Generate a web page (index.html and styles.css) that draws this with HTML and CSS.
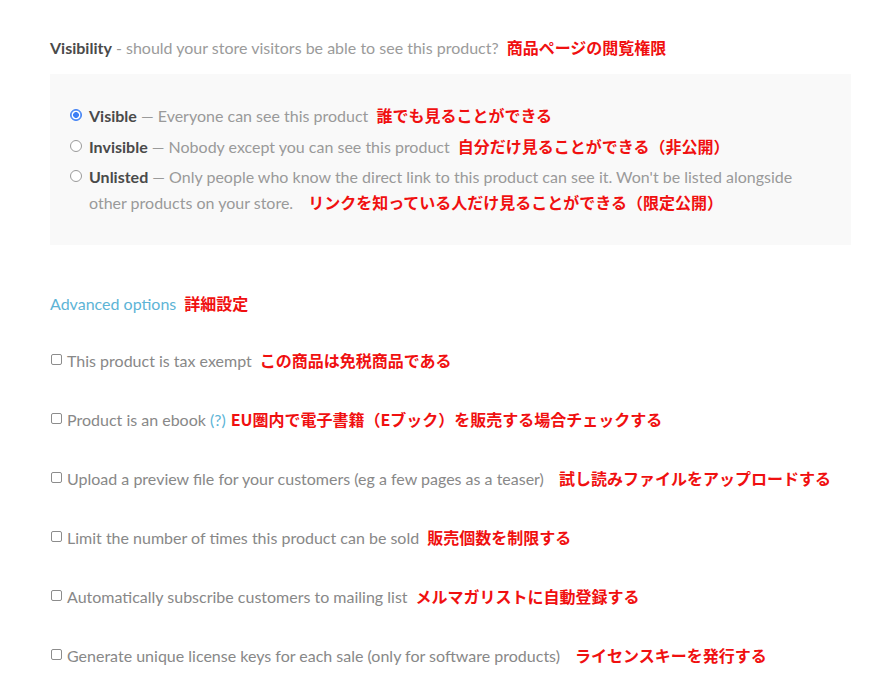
FILE: index.html
```html
<!DOCTYPE html>
<html lang="ja">
<head>
    <meta charset="UTF-8">
    <meta name="viewport" content="width=device-width, initial-scale=1.0">
    <title>Product settings</title>
    <link rel="stylesheet" href="styles.css">
</head>
<body>
    <div class="settings">
        <p class="section-title">
            <strong>Visibility</strong> - should your store visitors be able to see this product?<span class="note">商品ページの閲覧権限</span>
        </p>

        <div class="visibility-box">
            <label class="radio-row">
                <input type="radio" name="visibility" class="radio" checked>
                <span class="radio-text"><strong>Visible</strong> — Everyone can see this product<span class="note">誰でも見ることができる</span></span>
            </label>
            <label class="radio-row">
                <input type="radio" name="visibility" class="radio">
                <span class="radio-text"><strong>Invisible</strong> — Nobody except you can see this product<span class="note">自分だけ見ることができる（非公開）</span></span>
            </label>
            <label class="radio-row">
                <input type="radio" name="visibility" class="radio">
                <span class="radio-text"><strong>Unlisted</strong> — Only people who know the direct link to this product can see it. Won't be listed alongside other products on your store.<span class="note wide">リンクを知っている人だけ見ることができる（限定公開）</span></span>
            </label>
        </div>

        <p class="advanced">
            <a href="#" class="advanced-link">Advanced options</a><span class="note">詳細設定</span>
        </p>

        <div class="options">
            <label class="check-row">
                <input type="checkbox" class="checkbox">
                <span>This product is tax exempt<span class="note">この商品は免税商品である</span></span>
            </label>
            <label class="check-row">
                <input type="checkbox" class="checkbox">
                <span>Product is an ebook <a href="#" class="help">(?)</a><span class="note tight">EU圏内で電子書籍（Eブック）を販売する場合チェックする</span></span>
            </label>
            <label class="check-row">
                <input type="checkbox" class="checkbox">
                <span>Upload a preview file for your customers (eg a few pages as a teaser)<span class="note wide">試し読みファイルをアップロードする</span></span>
            </label>
            <label class="check-row">
                <input type="checkbox" class="checkbox">
                <span>Limit the number of times this product can be sold<span class="note">販売個数を制限する</span></span>
            </label>
            <label class="check-row">
                <input type="checkbox" class="checkbox">
                <span>Automatically subscribe customers to mailing list<span class="note">メルマガリストに自動登録する</span></span>
            </label>
            <label class="check-row">
                <input type="checkbox" class="checkbox">
                <span>Generate unique license keys for each sale (only for software products)<span class="note wide">ライセンスキーを発行する</span></span>
            </label>
        </div>
    </div>
</body>
</html>
```

FILE: styles.css
```css
body {
    margin: 0;
    background: #fff;
    font-family: Lato, "Noto Sans CJK JP", sans-serif;
    font-size: 16px;
    color: #999;
}

.settings {
    width: 801px;
    padding: 36px 0 0 50px;
}

.section-title {
    margin: 0;
    line-height: 24px;
    color: #9b9b9b;
}

.section-title strong {
    color: #4a4a4a;
}

.note {
    margin-left: 8px;
    font-family: "Noto Sans CJK JP", sans-serif;
    font-size: 16px;
    font-weight: bold;
    line-height: 1;
    color: #f01010;
}

.note.tight {
    margin-left: 5px;
}

.note.wide {
    margin-left: 15px;
}

.visibility-box {
    margin-top: 14px;
    padding: 29px 40px 29px 20px;
    background: #f9f9f9;
}

.radio-row {
    display: flex;
    align-items: flex-start;
    gap: 7px;
    line-height: 26px;
    margin-bottom: 4.5px;
    color: #9a9a9a;
}

.radio-row:last-child {
    margin-bottom: 0;
}

.radio-row strong {
    color: #4a4a4a;
}

.radio {
    appearance: none;
    flex: none;
    width: 12px;
    height: 12px;
    margin: 6px 0 0;
    border: 1px solid #9a9a9a;
    border-radius: 50%;
    background: #fff;
}

.radio:checked {
    border-color: #3d7ff5;
    background: radial-gradient(circle, #3d7ff5 0 2.6px, #fff 3.2px 4px, #6a9ff7 4.6px);
}

.advanced {
    margin: 47px 0 0;
    line-height: 24px;
}

.advanced-link {
    color: #5db4d6;
    text-decoration: none;
}

.options {
    display: flex;
    flex-direction: column;
    gap: 35px;
    margin-top: 33px;
}

.check-row {
    display: flex;
    align-items: flex-start;
    gap: 5px;
    line-height: 24px;
    color: #888;
}

.checkbox {
    appearance: none;
    flex: none;
    width: 11px;
    height: 11px;
    margin: 5px 0 0 1px;
    border: 1px solid #8c8c8c;
    border-radius: 2px;
    background: #fff;
}

.help {
    color: #5db4d6;
    text-decoration: none;
}
```
